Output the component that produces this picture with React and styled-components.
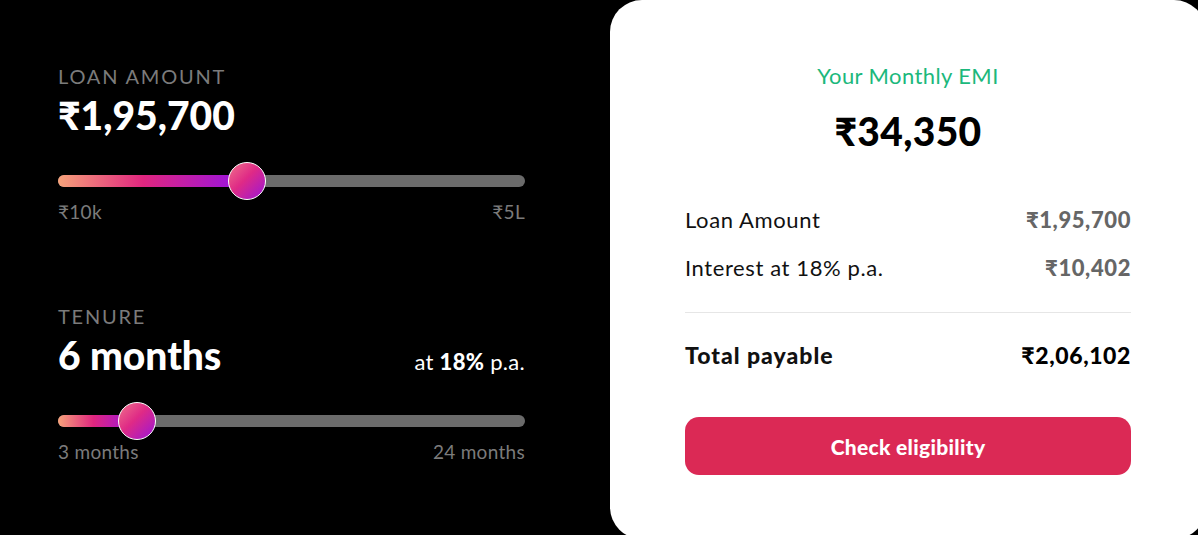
import React from "react";
import styled, { createGlobalStyle } from "styled-components";

const GlobalStyle = createGlobalStyle`
  html, body {
    margin: 0;
    padding: 0;
    background: #000;
    overflow: hidden;
  }
  * {
    box-sizing: border-box;
  }
  body {
    font-family: "Lato", "Noto Sans", sans-serif;
  }
`;

const Page = styled.div`
  display: flex;
  align-items: flex-start;
  width: 1198px;
  height: 535px;
  background: #000;
  overflow: hidden;
`;

const Controls = styled.div`
  width: 525px;
  padding: 64px 0 0 58px;
  display: flex;
  flex-direction: column;
  flex-shrink: 0;
`;

const Section = styled.div`
  display: flex;
  flex-direction: column;
  margin-bottom: ${({ $gap }) => $gap || 0}px;
`;

const Label = styled.div`
  color: #7b7b7b;
  font-size: 20px;
  letter-spacing: 1.8px;
  line-height: 24px;
`;

const ValueRow = styled.div`
  display: flex;
  align-items: baseline;
  justify-content: space-between;
  margin-top: 5px;
`;

const BigValue = styled.div`
  color: #fff;
  font-size: 39px;
  font-weight: 900;
  line-height: 44px;
`;

const Rate = styled.div`
  color: #fff;
  font-size: 22px;
  letter-spacing: 0.3px;

  b {
    font-weight: 900;
  }
`;

const Track = styled.div`
  position: relative;
  height: 12px;
  margin-top: 38px;
  border-radius: 6px;
  background: #6b6b6b;
`;

const Fill = styled.div`
  height: 100%;
  width: ${({ $pct }) => $pct}%;
  border-radius: 6px;
  background: linear-gradient(90deg, #f6a27a 0%, #e0267f 45%, #9412e6 100%);
`;

const Thumb = styled.div`
  position: absolute;
  top: 50%;
  left: ${({ $pct }) => $pct}%;
  width: 38px;
  height: 38px;
  border-radius: 50%;
  border: 1px solid #fff;
  transform: translate(-50%, -50%);
  background: linear-gradient(135deg, #f0718a 0%, #df2a86 45%, #9a16d8 100%);
`;

const Range = styled.div`
  display: flex;
  justify-content: space-between;
  margin-top: 14px;
  color: #7b7b7b;
  font-size: 19px;
  letter-spacing: 0.3px;
  line-height: 22px;
`;

const Card = styled.div`
  margin-left: 85px;
  width: 596px;
  height: 539px;
  flex-shrink: 0;
  border-radius: 32px;
  background: #fff;
  padding: 62px 75px 0 75px;
  display: flex;
  flex-direction: column;
`;

const EmiTitle = styled.div`
  text-align: center;
  color: #1cb87c;
  font-size: 22px;
  letter-spacing: 0.4px;
  line-height: 28px;
`;

const EmiValue = styled.div`
  text-align: center;
  color: #000;
  font-size: 39px;
  font-weight: 900;
  letter-spacing: 0.3px;
  line-height: 44px;
  margin-top: 19px;
`;

const Breakdown = styled.div`
  display: flex;
  flex-direction: column;
  margin-top: 55px;
`;

const Line = styled.div`
  display: flex;
  justify-content: space-between;
  align-items: baseline;
  margin-top: ${({ $total }) => ($total ? 8 : 0)}px;
  padding: ${({ $total }) => ($total ? "30px 0 0" : "0 0 24px")};
  border-top: ${({ $total }) => ($total ? "1px solid #e6e6e6" : "none")};
  font-size: ${({ $total }) => ($total ? 23 : 22)}px;
  letter-spacing: ${({ $total }) => ($total ? 1 : 0.6)}px;
  line-height: 24px;
  color: #111;
  font-weight: ${({ $total }) => ($total ? 900 : 400)};
`;

const Amount = styled.span`
  font-weight: 900;
  letter-spacing: 0.6px;
  color: ${({ $dark }) => ($dark ? "#000" : "#666")};
`;

const CheckButton = styled.button`
  margin-top: 50px;
  height: 58px;
  width: 100%;
  border: none;
  border-radius: 14px;
  background: #db2955;
  color: #fff;
  font-family: inherit;
  font-size: 21px;
  letter-spacing: 0.3px;
  font-weight: 900;
  cursor: pointer;
`;

const Slider = ({ pct }) => (
  <Track>
    <Fill $pct={pct} />
    <Thumb $pct={pct} />
  </Track>
);

export default function App() {
  return (
    <>
      <GlobalStyle />
      <Page>
        <Controls>
          <Section $gap={81}>
            <Label>LOAN AMOUNT</Label>
            <ValueRow>
              <BigValue>₹1,95,700</BigValue>
            </ValueRow>
            <Slider pct={40.5} />
            <Range>
              <span>₹10k</span>
              <span>₹5L</span>
            </Range>
          </Section>
          <Section>
            <Label>TENURE</Label>
            <ValueRow>
              <BigValue>6 months</BigValue>
              <Rate>
                at <b>18%</b> p.a.
              </Rate>
            </ValueRow>
            <Slider pct={17} />
            <Range>
              <span>3 months</span>
              <span>24 months</span>
            </Range>
          </Section>
        </Controls>
        <Card>
          <EmiTitle>Your Monthly EMI</EmiTitle>
          <EmiValue>₹34,350</EmiValue>
          <Breakdown>
            <Line>
              <span>Loan Amount</span>
              <Amount>₹1,95,700</Amount>
            </Line>
            <Line>
              <span>Interest at 18% p.a.</span>
              <Amount>₹10,402</Amount>
            </Line>
            <Line $total>
              <span>Total payable</span>
              <Amount $dark>₹2,06,102</Amount>
            </Line>
          </Breakdown>
          <CheckButton>Check eligibility</CheckButton>
        </Card>
      </Page>
    </>
  );
}
